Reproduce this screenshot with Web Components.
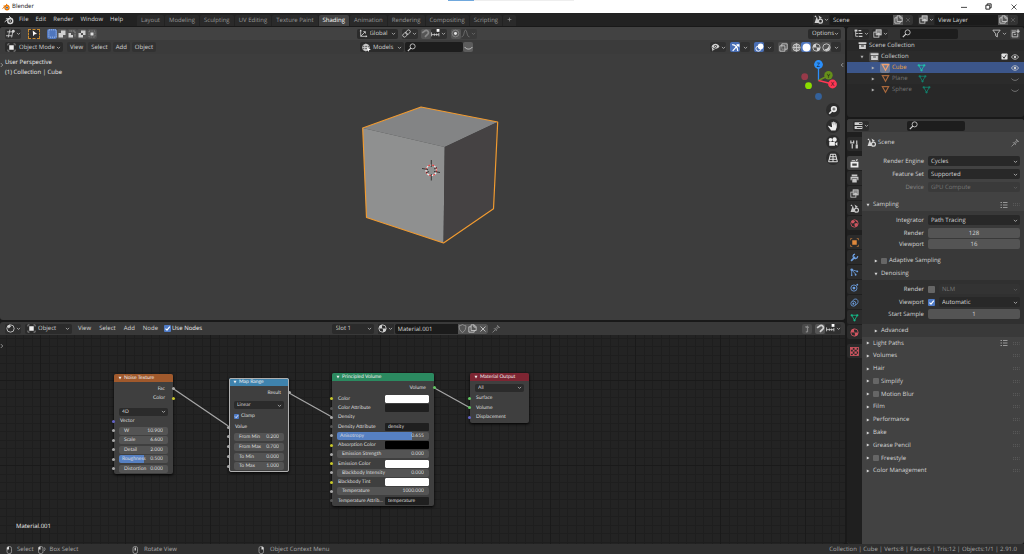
<!DOCTYPE html>
<html lang="en">
<head>
<meta charset="utf-8">
<title>Blender</title>
<style>
html, body { height: 100%; }
body { margin: 0; background: #191919; color: #d6d6d6; font: 6px/9px "Open Sans", "Noto Sans", sans-serif; text-rendering: geometricPrecision; overflow: hidden; }
</style>
</head>
<body>
<blender-app></blender-app>
<script>
const BASE = `
*, *::before { box-sizing: border-box; }
button, input, select { font: inherit; color: inherit; margin: 0; border: 0; padding: 0; background: none; text-rendering: inherit; }
select { appearance: none; }
input { min-width: 0; outline: 0; }
input[type=checkbox] { appearance: none; width: 7px; height: 7px; border-radius: 1px; background: #666; flex: none; }
input[type=checkbox]:checked { background: #4f7bc6 url("data:image/svg+xml,%3Csvg xmlns='http://www.w3.org/2000/svg' viewBox='0 0 7 7'%3E%3Cpath d='M1.5 3.6 3 5.2 5.8 1.6' fill='none' stroke='white' stroke-width='1.1'/%3E%3C/svg%3E"); }
label, span, button { white-space: nowrap; }
`;
function define(name, css, render) {
  customElements.define(name, class extends HTMLElement {
    connectedCallback() {
      if (this.shadowRoot) return;
      const a = (k, d = '') => this.getAttribute(k) ?? d;
      this.attachShadow({ mode: 'open' }).innerHTML = `<style>${BASE}${css}</style>${render(a, this)}`;
    }
  });
}

/* ---------- icons, on a 16 unit grid ---------- */
const S = 'fill="none" stroke="currentColor" stroke-width="1.5"';
const S2 = 'fill="none" stroke="currentColor" stroke-width="2.2"';
const F = 'fill="currentColor"';
const ICONS = {
  down: `<path ${S2} d="M3 6l5 5 5-5"/>`,
  left: `<path ${S2} d="M11 3 6 8l5 5"/>`,
  right: `<path ${S2} d="M5 3l5 5-5 5"/>`,
  triR: `<path ${F} d="M3 2l11 6-11 6z"/>`,
  triD: `<path ${F} d="M2 3h12L8 14z"/>`,
  plus: `<path ${S2} d="M8 2v12M2 8h12"/>`,
  close: `<path ${S} d="M3 3l10 10M13 3 3 13"/>`,
  blender: `<path ${S} d="M1 11l8-6.500M3 6h8M8 2l6 5"/><circle cx="10" cy="9.500" r="4" ${S2}/><circle cx="10" cy="9.500" r="1.300" ${F}/>`,
  blenderColor: `<g stroke="#ea7600"><path fill="none" stroke-width="2" d="M1 11l8-6.500M3 6h8M8 2l6 5"/><circle cx="10" cy="9.500" r="4" fill="#fff" stroke-width="2.600"/></g><circle cx="10" cy="9.500" r="1.800" fill="#265787"/>`,
  editor3d: `<path ${S} d="M2 5h12M0 12h11M7 1 4 15M12 5l-2 10"/><circle cx="13" cy="4" r="2.500" ${F}/>`,
  cursor: `<path fill="#fff" d="M4 1l10 8-5.500.8L5 14z"/>`,
  selNew: `<rect x="1.500" y="1.500" width="13" height="13" fill="none" stroke="#cfe0ff" stroke-width="1.200" stroke-dasharray="2 1.500"/>`,
  selAdd: `<path fill="#d0d0d0" d="M6 1h9v9h-5v5H1V6h5z"/>`,
  selSub: `<path fill="none" stroke="#c0c0c0" stroke-width="1.400" stroke-dasharray="2 1.300" d="M3 2h11v11"/><path fill="#d0d0d0" d="M1 6h5v4h4v5H1z"/>`,
  selXor: `<path fill="#d0d0d0" fill-rule="evenodd" d="M6 1h9v9h-5v5H1V6h5zM6 6v4h4V6z"/>`,
  selInt: `<rect x="2" y="2" width="12" height="12" fill="none" stroke="#b0b0b0" stroke-dasharray="2 1.300"/><rect x="5" y="5" width="6" height="6" fill="#e0e0e0"/>`,
  objmode: `<rect x="4" y="4" width="8" height="8" fill="#eee"/><path ${S} stroke-opacity=".6" d="M1.500 4.500v-3h3M11.500 1.500h3v3M14.500 11.500v3h-3M4.500 14.500h-3v-3"/>`,
  axes: `<path ${S} d="M3 2v11h11M3 13l7-7"/><path ${F} d="M1 4l2-3 2 3zM12 11l3 2-3 2zM7 4h5v5z"/>`,
  link: `<g ${S} transform="rotate(-42 8 8)"><rect x="0" y="5" width="9" height="6" rx="3"/><rect x="7" y="5" width="9" height="6" rx="3"/></g>`,
  magnet: `<path fill="none" stroke="currentColor" stroke-width="3" d="M2 7l4-3c5-4 9 2 6 5l-5 5"/>`,
  snap: `<path ${S} d="M1 6v7M1 10h13M6 8v4M10 8v4M14 7v6"/><rect x="10" y="0" width="5" height="5" fill="#fff"/>`,
  prop: `<circle cx="8" cy="8" r="6" ${S} opacity=".4"/><circle cx="8" cy="8" r="2.600" fill="#e4e4e4"/>`,
  curve: `<path ${S} d="M1 14c5 0 4-12 7-12s2 12 7 12"/>`,
  globe: `<circle cx="7" cy="8" r="6" ${S}/><path ${S} d="M7 2v12M1 8h12M3 4.500h8M3 11.500h8"/><ellipse cx="7" cy="8" rx="3" ry="6" ${S}/><path fill="#fff" d="M9 8l7 4-3 .5L11 16z"/>`,
  search: `<circle cx="10" cy="6" r="4.500" ${S}/><path ${S2} d="M6.800 9.200 1.500 14.500"/>`,
  eyeClosed: `<path ${S} d="M1 7c3 5 11 5 14 0"/>`,
  eye: `<path ${S} d="M1 8c3-6 11-6 14 0-3 6-11 6-14 0z"/><circle cx="8" cy="8" r="2.500" ${F}/>`,
  eyeSel: `<path ${F} fill-rule="evenodd" d="M1 6c3-6 11-6 14 0-2 3-5 5-9 3.500L3 8zM8 3.500a2.500 2.500 0 1 0 .1 0z"/><circle cx="8" cy="6" r="1.300" ${F}/><path ${F} d="M1 7l6 5H4.500L3 15z"/>`,
  gizmo: `<path ${S2} d="M2 3c6 0 10 5 10 11M3 14 13 3"/><path ${F} d="M9 2h6v6z"/>`,
  overlay: `<circle cx="10" cy="6" r="5" fill="#fff"/><circle cx="6" cy="10" r="4.500" fill="none" stroke="#fff" stroke-width="1.600"/>`,
  xray: `<path ${S} d="M1.500 5h9v9.500h-9zM5 5V1.500h9.500V11h-4"/><path ${S} stroke-dasharray="1.500 1.500" d="M5 5v6h5"/>`,
  wire: `<circle cx="8" cy="8" r="6.500" ${S}/><path ${S} d="M1.500 8h13M8 1.500v13"/><ellipse cx="8" cy="8" rx="3.200" ry="6.500" ${S}/>`,
  solid: `<circle cx="8" cy="8" r="7" fill="#fff"/>`,
  matball: `<circle cx="8" cy="8" r="6.500" ${S}/><path ${F} d="M8 1.500A6.500 6.500 0 0 0 8 8h6.500A6.500 6.500 0 0 1 8 14.500 6.500 6.500 0 0 0 8 8H1.500A6.500 6.500 0 0 1 8 1.500z"/>`,
  rendered: `<circle cx="8" cy="8" r="6.500" ${S}/><path ${F} d="M4 11a7 7 0 0 0 8-7 6 6 0 0 1-4 10 6 6 0 0 1-4-3z"/>`,
  outliner: `<path ${S} d="M3 4v9h5M3 8h5"/><rect x="1" y="1" width="5" height="3.500" ${F}/><path ${S2} d="M8 3h5M9 8h6M9 13h6"/>`,
  layers: `<rect x="1.500" y="5.500" width="9" height="9" ${S}/><rect x="5.500" y="1.500" width="9" height="9" fill="#888" stroke="currentColor" stroke-width="1.500"/><path ${F} d="M6 10l3-4 2 2 1-1 2 3z"/>`,
  filter: `<path ${S} d="M1.500 2h13l-5 6.500V14l-3-2V8.500z"/>`,
  newcol: `<path ${S} d="M2 6v8h10V8M2 6h6M5 9.500h4M1 3.500h8"/><path ${S2} d="M12.500 1v6M9.500 4h6"/>`,
  archive: `<path ${F} d="M1 2h14v3.500H1zM2 6.500h12V14H2zM5.500 8v1.800h5V8z" fill-rule="evenodd"/>`,
  mesh: `<path fill="none" stroke="currentColor" stroke-width="2.200" d="M2.500 3h11L8 13z"/>`,
  meshData: `<path ${S} d="M3 4h10L8 13z"/><g ${F}><circle cx="3" cy="4" r="2"/><circle cx="13" cy="4" r="2"/><circle cx="8" cy="13" r="2"/></g>`,
  scene: `<path ${F} d="M5 2l3.500 12H1zM1 2l2-1 1 2-2 1z"/><circle cx="11.500" cy="11" r="3.500" ${S2}/><path ${F} d="M8 1l6 4-4 2z"/>`,
  copy: `<path ${S} d="M5.500 1.500H11L14.500 5v6.500h-9zM10.500 1.500V5.500h4M5.500 5h-4v9.500H11v-3"/>`,
  shield: `<path ${S} d="M2 3c3 0 4-1 6-2 2 1 3 2 6 2 0 6-1 9-6 12-5-3-6-6-6-12z"/>`,
  pin: `<path ${S} d="M1 15l5-5M3.500 7.500l5 5M5 8c2 0 5-2 5-5M8 11c0-2 2-5 5-5M9 2l5 5"/>`,
  props: `<rect x="1" y="2" width="14" height="5" rx="1" ${F}/><rect x="1" y="9" width="14" height="5" rx="1" ${F}/><path stroke="#2b2b2b" stroke-width="1.600" d="M9 4.500h5M5 11.500h9"/>`,
  tool: `<path ${S2} d="M4 7v8M12 1v7"/><path ${S2} d="M1.500 1v4h5V1"/><rect x="10" y="8" width="4" height="7" ${F}/>`,
  render: `<path ${F} fill-rule="evenodd" d="M1 5h14v10H1zM4 8v4h8V8z"/><path ${S} d="M3 3h6M11 1.500h3M10 4l2-2"/>`,
  output: `<path ${F} d="M3 1h10v3H3zM1 5h14v6h-2V8H3v3H1zM4 9h8v6H4z"/>`,
  world: `<circle cx="8" cy="8" r="6.500" ${S}/><path ${F} d="M2 5l4-3 3 2-2 3-3 1zM8 8l5-1 1 3-4 4-2-3zM10 2l4 3h-3z"/>`,
  object: `<rect x="4" y="4" width="8" height="8" ${F}/><path ${S} stroke-opacity=".7" d="M1 4V1h3M12 1h3v3M15 12v3h-3M4 15H1v-3"/>`,
  wrench: `<path fill="none" stroke="currentColor" stroke-width="3" d="M2 14l7-7"/><path ${S2} d="M13.500 5.500A4 4 0 1 1 9 2"/>`,
  particles: `<path ${S} d="M3 3l10 3M3 3l7 8M3 3v10"/><g ${F}><circle cx="3" cy="3" r="2.300"/><circle cx="13" cy="6" r="1.600"/><circle cx="10" cy="12" r="1.600"/><circle cx="3" cy="13" r="1.400"/></g>`,
  physics: `<circle cx="7" cy="9" r="5.500" ${S}/><circle cx="7" cy="9" r="2.500" ${F}/><circle cx="13" cy="3" r="1.600" ${F}/>`,
  constraint: `<circle cx="6" cy="10" r="4.500" ${S}/><circle cx="6" cy="10" r="1.800" ${F}/><path ${S} d="M5 5c2-5 11-4 9 3-1 3-3 4-4 4"/>`,
  texture: `<path ${F} d="M1 1h4v4H1zM8 1h4v4H8zM5 5h3v3H5zM12 5h3v3h-3zM1 8h4v4H1zM8 8h4v4H8zM5 12h3v3H5zM12 12h3v3h-3z"/><rect x="1" y="1" width="14" height="14" ${S}/>`,
  list: `<path ${S} d="M1 3h3M1 8h3M1 13h3M6 3h9M6 8h9M6 13h9"/>`,
  grip: `<path stroke="currentColor" stroke-width="1.400" stroke-dasharray="1.400 3" d="M1 6h14M1 10h14"/>`,
  zoom: `<circle cx="9.500" cy="6.500" r="5" ${F}/><path fill="none" stroke="currentColor" stroke-width="2.600" d="M6 10l-4 4"/><path stroke="#333" stroke-width="1.200" d="M9.500 4v5M7 6.500h5"/>`,
  hand: `<path ${F} d="M4 9 1 7.500c-1 0-1 1 0 2L5 15h7l2-5V4.500c0-1-1.500-1-1.600 0L12 8V2.500c0-1.200-1.600-1.200-1.700 0L10 7.500V1.500C10 .3 8.300.3 8.300 1.500V7.500L7.500 2.500C7.300 1.300 5.700 1.500 5.800 2.700L6.500 10z"/>`,
  camera: `<circle cx="4" cy="4.500" r="3" ${F}/><circle cx="10.500" cy="4" r="3.500" ${F}/><path ${F} d="M2 8h9v6H2zM12 10l3-2v6l-3-2z"/>`,
  persp: `<path ${S} d="M4 2h8l3 12H1zM3 6h10M2 10h12M8 2v12"/>`,
  mouseL: `<rect x="4" y="1" width="9" height="14" rx="3.500" ${S}/><path fill="#e0e0e0" d="M4 7V3l4-2v6z"/>`,
  mouseLd: `<rect x="1" y="1" width="9" height="14" rx="3.500" ${S}/><path fill="#e0e0e0" d="M1 7V3l4-2v6z"/><path ${S} d="M12 3c3 1 3 5 0 7"/>`,
  mouseM: `<rect x="4" y="1" width="9" height="14" rx="3.500" ${S}/><rect x="7.300" y="3" width="2.400" height="6" fill="#e0e0e0"/>`,
  mouseR: `<rect x="4" y="1" width="9" height="14" rx="3.500" ${S}/><path fill="#e0e0e0" d="M13 7V3L9 1v6z"/>`,
  node: `<circle cx="8" cy="8" r="6.500" ${S}/><path ${F} d="M2 4l4-3 3 3-4 4z"/>`,
  parent: `<path ${S2} d="M8 14V5H4M8 14H5"/><path ${F} d="M5 7l3-5 3 5z"/>`,
  minimize: `<path ${S2} d="M0 9h16"/>`,
  restore: `<path ${S2} d="M2 5h9v9H2zM5 5V2h9v9h-3"/>`,
  checked: `<rect x="1" y="1" width="14" height="14" rx="2" fill="#e4e4e4"/><path fill="none" stroke="#222" stroke-width="2" d="M4 8l3 4 5-8"/>`
};
define('ui-icon', `:host { display: inline-flex; flex: none; } svg { display: block; }`,
  a => `<svg width="${a('s', 10)}" height="${a('s', 10)}" viewBox="0 0 16 16" aria-hidden="true">${ICONS[a('n')]}</svg>`);

/* icon button; "menu" adds a drop-down arrow */
define('ui-tool', `
:host { display: block; flex: none; }
button { display: flex; align-items: center; justify-content: center; gap: 1px; width: var(--w, 10px); height: 10px; background: var(--bg, transparent); border-radius: var(--r, 2px); color: var(--fg, #d0d0d0); }`,
  a => `<button type="button" aria-label="${a('label', a('n'))}"><ui-icon n="${a('n')}" s="${a('s', 9)}"></ui-icon>${a('menu') ? '<ui-icon n="down" s="5"></ui-icon>' : ''}</button>`);

/* drop-down list with optional leading icon */
define('ui-select', `
:host { display: block; }
div { display: flex; align-items: center; position: relative; height: var(--h, 10px); border-radius: 2px; background: var(--bg, #2b2b2b); color: var(--fg, #d0d0d0); }
select { width: 100%; height: 100%; padding-left: var(--pl, 3px); }
.i { position: absolute; left: 2px; } .d { position: absolute; right: 2px; }`,
  a => `<div>${a('icon') ? `<ui-icon class="i" n="${a('icon')}" s="9"></ui-icon>` : ''}<select aria-label="${a('label')}"><option>${a('value')}</option></select><ui-icon class="d" n="down" s="5"></ui-icon></div>`);

define('ui-search', `
:host { display: block; }
div { display: flex; align-items: center; height: 10px; border-radius: 2px; background: #1d1d1d; color: #d0d0d0; padding-left: 2px; gap: 2px; }
input { flex: 1; height: 10px; width: 20px; }`,
  a => `<div><ui-icon n="search" s="9"></ui-icon><input type="text" aria-label="${a('label')}"></div>`);

define('ui-menus', `
:host { display: flex; } button { height: 10px; padding: 0 var(--px, 3px); margin-right: var(--gap, 1px); border-radius: 2px; background: var(--mbg, transparent); }`,
  a => a('items').split(',').map(t => `<button type="button">${t}</button>`).join(''));

/* ---------- window title and top bar ---------- */
define('title-bar', `
:host { display: flex; align-items: center; height: 13px; background: #fff; color: #111; padding: 0 7px 0 2px; position: relative; }
span { flex: 1; padding-left: 2px; }
.win { display: flex; gap: 18px; color: #222; }
i { position: absolute; top: 0; left: 448px; width: 126px; height: 1px; background: linear-gradient(90deg, #70a8dd 26px, #eee 26px); }`,
  () => `<i></i><ui-icon n="blenderColor" s="8"></ui-icon><span>Blender</span><div class="win">
<ui-tool n="minimize" s="6" style="--w:7px;--fg:#222"></ui-tool><ui-tool n="restore" s="7" style="--w:7px;--fg:#222"></ui-tool><ui-tool n="close" s="8" style="--w:7px;--fg:#222"></ui-tool></div>`);

define('id-field', `
:host { display: flex; gap: 1px; }
div { display: flex; height: 10px; border-radius: 2px; background: #1b1b1b; overflow: hidden; }
input { width: 63px; padding-left: 3px; height: 10px; }
ui-tool { --r: 0; }`,
  a => `<ui-tool n="${a('icon')}" menu="1" style="--w:16px;--bg:#2c2c2c"></ui-tool><div><input type="text" aria-label="${a('label')}" value="${a('value')}">${
    a('user') ? '<ui-tool n="shield" style="--bg:#555;--fg:#999;--w:10px"></ui-tool>' : ''}<ui-tool n="copy" style="--bg:#555"></ui-tool><ui-tool n="close" s="${a('user') ? 8 : 6}" style="--bg:${a('user') ? '#555' : '#333'};--fg:${a('user') ? '#ddd' : '#777'}"></ui-tool></div>`);

define('top-bar', `
:host { display: flex; align-items: center; height: 13px; background: #222; padding: 0 6px 0 4px; }
ui-menus { padding-left: 2px; }
nav { display: flex; align-self: flex-end; margin-left: 10px; gap: 1px; }
nav button { height: 11px; padding: 0 4px; border-radius: 2px 2px 0 0; background: #2a2a2a; color: #979797; }
nav button.on { background: #424242; color: #fff; }
.end { margin-left: auto; display: flex; gap: 5px; }`,
  () => `<ui-icon n="blender" s="10"></ui-icon><ui-menus items="File,Edit,Render,Window,Help"></ui-menus>
<nav>${['Layout', 'Modeling', 'Sculpting', 'UV Editing', 'Texture Paint', 'Shading', 'Animation', 'Rendering', 'Compositing', 'Scripting']
    .map(t => `<button type="button"${t === 'Shading' ? ' class="on"' : ''}>${t}</button>`).join('')}<button type="button" aria-label="Add workspace"><ui-icon n="plus" s="5"></ui-icon></button></nav>
<div class="end"><id-field icon="scene" label="Scene" value="Scene"></id-field><id-field icon="layers" label="View layer" value="View Layer"></id-field></div>`);

/* header strip with start, centre and end slots */
define('area-header', `
:host { display: flex; align-items: center; height: 13px; background: var(--hbg, #393939); padding: 0 4px 0 5px; flex: none; }
div { display: flex; align-items: center; }
.s, .e { flex: 1 1 0; } .c { padding-right: 13px; } .e { justify-content: flex-end; }`,
  () => `<div class="s"><slot name="s"></slot></div><div class="c"><slot name="c"></slot></div><div class="e"><slot name="e"></slot></div>`);

/* ---------- 3D viewport ---------- */
define('view-3d', `
:host { display: flex; flex-direction: column; background: #3d3d3d; min-height: 0; border-radius: 3px; overflow: hidden; }
.r { display: flex; align-items: center; }
.scene { flex: 1; position: relative; padding: 4px 5px; color: #eee; }
p { margin: 0 0 1px; line-height: 9px; }
.cube { position: absolute; left: 360px; top: 51px; }
.giz { position: absolute; right: 5px; top: 4px; }
.nav { position: absolute; right: 5px; top: 49px; display: grid; gap: 2px; }
.l, .rr { position: absolute; top: 8px; left: -1px; color: #aaa; } .rr { left: auto; right: 0; }
.nav button { width: 14px; height: 14px; border-radius: 7px; background: #2c2c2c; color: #eee; display: grid; place-items: center; }`,
  () => `
<area-header style="--hbg:#424242">
 <div slot="s" class="r"><ui-tool n="editor3d" menu="1" style="--w:16px;--bg:#303030"></ui-tool>
  <ui-tool n="cursor" s="7" style="--w:12px;--bg:#303030;margin:0 7px;outline:1px dashed #c98a2e;outline-offset:-1px"></ui-tool>
  <ui-tool n="selNew" style="--bg:#4f76bd"></ui-tool><ui-tool n="selAdd" s="8" style="--bg:#555"></ui-tool><ui-tool n="selSub" s="8" style="--bg:#505050"></ui-tool><ui-tool n="selXor" s="8" style="--bg:#505050"></ui-tool><ui-tool n="selInt" s="8" style="--bg:#505050"></ui-tool></div>
 <div slot="c" class="r"><ui-select icon="axes" label="Transform orientation" value="Global" style="--pl:13px;width:41px;margin-right:4px"></ui-select>
  <ui-tool n="link" menu="1" label="Pivot" style="--w:16px;--bg:#303030;margin-right:3px"></ui-tool><ui-tool n="magnet" label="Snap" style="--bg:#555;--fg:#888"></ui-tool><ui-tool n="snap" menu="1" label="Snap to" style="--w:16px;--bg:#303030;margin-right:4px"></ui-tool>
  <ui-tool n="prop" label="Proportional editing" style="--bg:#565656"></ui-tool><ui-tool n="curve" menu="1" label="Falloff" style="--w:16px;--bg:#3a3a3a;--fg:#777"></ui-tool></div>
 <div slot="e"><ui-select label="Options" value="Options" style="width:33px;--pl:4px"></ui-select></div>
</area-header>
<area-header style="--hbg:#3b3b3b;height:14px">
 <div slot="s" class="r"><ui-select icon="objmode" label="Mode" value="Object Mode" style="--pl:14px;width:58px;margin-right:4px"></ui-select><ui-menus items="View,Select,Add,Object" style="--mbg:#323232;--gap:2px"></ui-menus></div>
 <div slot="c" class="r"><ui-select icon="globe" label="Asset" value="Models" style="--pl:13px;width:44px;margin-right:1px"></ui-select><ui-search label="Search assets" style="width:58px"></ui-search><ui-tool n="eyeClosed" style="--bg:#5c5c5c"></ui-tool></div>
 <div slot="e" class="r"><ui-tool n="eyeSel" menu="1" style="--w:16px;--bg:#303030;margin-right:4px"></ui-tool><ui-tool n="gizmo" style="--bg:#4a6fb5;--fg:#fff"></ui-tool><ui-tool n="down" s="5" label="Gizmos" style="--bg:#303030;margin-right:4px"></ui-tool><ui-tool n="overlay" style="--bg:#4a6fb5"></ui-tool><ui-tool n="down" s="5" label="Overlays" style="--bg:#303030;margin-right:4px"></ui-tool><ui-tool n="xray" style="--bg:#505050;margin-right:3px"></ui-tool><ui-tool n="wire" style="--bg:#505050"></ui-tool><ui-tool n="solid" style="--bg:#4f76bd"></ui-tool><ui-tool n="matball" style="--bg:#505050"></ui-tool><ui-tool n="rendered" style="--bg:#505050"></ui-tool><ui-tool n="down" s="5" label="Shading" style="--bg:#303030"></ui-tool></div>
</area-header>
<div class="scene">
 <p>User Perspective</p><p>(1) Collection | Cube</p>
 <ui-icon class="l" n="right" s="6"></ui-icon><ui-icon class="rr" n="left" s="6"></ui-icon>
 <svg class="cube" width="140" height="140" viewBox="360 105 140 140" role="img" aria-label="Cube">
  <path fill="#838485" d="M362.700 128 421 107l76.700 15-53 25z"/><path fill="#8f9090" d="M362.700 128l82 19-1.200 96-77-25.500z"/><path fill="#454243" d="M444.700 147l53-25-4.200 86.700-50 34.300z"/>
  <path fill="none" stroke="#f09a30" stroke-width="1.200" stroke-linejoin="round" d="M362.700 128 421 107l76.700 15-4.200 86.700-50 34.300-77-25.500z"/>
  <circle cx="431.300" cy="170.300" r="5.300" fill="none" stroke="#eee" stroke-width="1.200"/><circle cx="431.300" cy="170.300" r="5.300" fill="none" stroke="#e04040" stroke-width="1.200" stroke-dasharray="2.100 2.100"/>
  <path stroke="#222" stroke-width=".8" d="M431.300 160v7M431.300 174v6.500M422 168.500l6 1M434 171.500l6 1M426 173l3-1.500M434 169l3-1.500"/>
 </svg>
 <svg class="giz" width="40" height="46" viewBox="800 58 40 46" aria-label="Orientation" font-size="6" text-anchor="middle">
  <circle cx="804.700" cy="76.700" r="3.400" fill="#963a49"/><circle cx="818.500" cy="96.500" r="3.400" fill="#34619a"/>
  <path stroke="#2b8ffb" stroke-width="1.300" d="M818.500 80.500v-14"/><path stroke="#6b8f1c" stroke-width="1.500" d="M818.500 80.500l8-4"/><path stroke="#ff3653" stroke-width="1.500" d="M818.500 80.500l12 3"/>
  <circle cx="828.500" cy="75.300" r="4.200" fill="#66901a"/><circle cx="832.500" cy="84" r="4.400" fill="#ff3653"/><circle cx="818.500" cy="64.500" r="4.400" fill="#2b8ffb"/><circle cx="808.500" cy="85.700" r="3.400" fill="#8bdc00"/>
  <g fill="#111"><text x="818.500" y="67">Z</text><text x="828.500" y="78">Y</text><text x="832.500" y="86">X</text></g>
 </svg>
 <div class="nav">${['zoom', 'hand', 'camera', 'persp'].map(n => `<button type="button" aria-label="${n}"><ui-icon n="${n}" s="10"></ui-icon></button>`).join('')}</div>
</div>`);

/* ---------- shader nodes ---------- */
/* A row of a node. kind: out, in, num, select, check, color, text */
define('node-row', `
:host { display: flex; align-items: center; height: 9px; position: relative; padding: 0 5px; }
label, .t { display: flex; align-items: center; width: 100%; height: 9px; gap: 2px; }
.out { justify-content: flex-end; padding-right: 3px; }
.in { padding-left: 1px; }
.num { height: 8px; border-radius: 2px; background: #545454; padding: 0 5px; gap: 0; }
.num span { flex: none; }
.num input { flex: 1 1 0; width: 0; text-align: right; height: 8px; }
.num[style] { padding-left: 3px; }
.two { padding-left: 1px; gap: 0; } .two span { flex: 1 1 0; width: 0; }
.two input { width: 44px; height: 8px; border-radius: 1px; background: #1f1f1f; padding: 0 3px; flex: none; }
.two input[type=color]::-webkit-color-swatch-wrapper { padding: 0; }
.two input[type=color]::-webkit-color-swatch { border: 0; border-radius: 1px; }
.two input[type=color] { padding: 0; }
ui-select { width: 100%; --h: 8px; --bg: #2b2b2b; }
input[type=checkbox] { width: 5px; height: 5px; }
.dot { position: absolute; top: 3px; width: 3px; height: 3px; border-radius: 2px; left: -2px; background: var(--d); }
.dot.o { left: auto; right: -2px; }`,
  a => {
    const k = a('kind'), t = a('t'), v = a('v'), d = a('d');
    const dot = d ? `<i class="dot${k === 'out' ? ' o' : ''}" style="--d:${d}"></i>` : '';
    const fill = a('fill') ? ` style="background:linear-gradient(90deg,#5680c2 ${a('fill')},#545454 ${a('fill')})"` : '';
    return dot + ({
      out: () => `<div class="t out">${t}</div>`,
      in: () => `<div class="t in">${t}</div>`,
      num: () => `<label class="num"${fill}><span>${t}</span><input type="text" value="${v}"></label>`,
      select: () => `<ui-select label="Mode" value="${v}"></ui-select>`,
      check: () => `<label><input type="checkbox" checked><span>${t}</span></label>`,
      color: () => `<label class="two"><span>${t}</span><input type="color" value="${v}"></label>`,
      text: () => `<label class="two"><span>${t}</span><input type="text" value="${v}"></label>`
    })[k]();
  });

define('shader-node', `
:host { position: absolute; display: flex; flex-direction: column; background: #3f3f3f; border-radius: 2px; box-shadow: 0 1px 3px #000; font: 5px/8px Lato, "Open Sans", sans-serif; color: #ddd; outline: 1px solid var(--line, transparent); outline-offset: -1px; }
header { display: flex; align-items: center; gap: 2px; height: 8px; padding-left: 4px; background: var(--c); border-radius: 2px 2px 0 0; color: #eee; }
div { flex: 1; display: flex; flex-direction: column; justify-content: space-between; padding: 2px 0 1px; }`,
  a => `<header><ui-icon n="triD" s="4"></ui-icon>${a('t')}</header><div><slot></slot></div>`);

const G = '#a8a8a8', Y = '#c7c729', V = '#6363c7', W = '#63c763', D = '#555';
define('shader-editor', `
:host { display: flex; flex-direction: column; min-height: 0; border-radius: 3px; overflow: hidden; }
.r { display: flex; align-items: center; }
label { display: flex; gap: 1px; align-items: center; margin-left: 1px; color: #eee; }
.canvas { flex: 1; position: relative; background-color: #232323;
 background-image: linear-gradient(90deg, #1a1a1a 1px, transparent 1px), linear-gradient(#1a1a1a 1px, transparent 1px), linear-gradient(90deg, #1e1e1e 1px, transparent 1px, transparent 9px, #1e1e1e 9px, #1e1e1e 10px, transparent 10px), linear-gradient(#1e1e1e 1px, transparent 1px, transparent 9px, #1e1e1e 9px, #1e1e1e 10px, transparent 10px);
 background-size: 85px 85px, 85px 85px, 17px 17px, 17px 17px; background-position: 40px 45px, 40px 45px, 6px 11px, 6px 11px; }
.links { position: absolute; left: 0; top: 0; }
.name { position: absolute; left: 16px; bottom: 13px; color: #eee; }
.l { position: absolute; left: -1px; top: 8px; color: #aaa; }`,
  () => `
<area-header>
 <div slot="s" class="r"><ui-tool n="node" menu="1" style="--w:16px;--bg:#2e2e2e;margin-right:4px"></ui-tool><ui-select icon="objmode" label="Shader type" value="Object" style="--pl:13px;width:47px;margin-right:3px"></ui-select><ui-menus items="View,Select,Add,Node" style="--gap:2px"></ui-menus><label><input type="checkbox" checked>Use Nodes</label></div>
 <div slot="c" class="r"><ui-select label="Slot" value="Slot 1" style="--pl:4px;width:42px;margin-right:4px"></ui-select><id-field icon="matball" user="1" label="Material" value="Material.001"></id-field><ui-tool n="pin" style="--fg:#888;margin-left:4px"></ui-tool></div>
 <div slot="e" class="r"><ui-tool n="parent" style="--bg:#4a4a4a;--fg:#888;margin-right:3px"></ui-tool><ui-tool n="magnet" style="--bg:#555"></ui-tool><ui-tool n="snap" menu="1" style="--w:16px;--bg:#303030"></ui-tool></div>
</area-header>
<div class="canvas">
 <svg class="links" width="560" height="200" viewBox="0 335 560 200" fill="none" stroke="#a5a5a5" stroke-width="1.300" aria-hidden="true"><path d="M173 388.500l56 38M289 393l43 24M433.500 387.500l36 20"/></svg>
 <shader-node t="Noise Texture" style="left:114px;top:39px;width:59px;height:100px;--c:#a0592c">
  <node-row kind="out" t="Fac" d="${G}"></node-row><node-row kind="out" t="Color" d="${Y}"></node-row><node-row kind="select" v="4D" style="margin-top:4px"></node-row><node-row kind="in" t="Vector" d="${V}"></node-row>
  <node-row kind="num" t="W" v="10.900" d="${G}"></node-row><node-row kind="num" t="Scale" v="6.600" d="${G}"></node-row><node-row kind="num" t="Detail" v="2.000" d="${G}"></node-row><node-row kind="num" t="Roughness" v="0.500" fill="50%" d="${G}"></node-row><node-row kind="num" t="Distortion" v="0.000" d="${G}"></node-row>
 </shader-node>
 <shader-node t="Map Range" style="left:229px;top:43px;width:60px;height:94px;--c:#3f83ad;--line:#b0b0b0">
  <node-row kind="out" t="Result" d="${G}"></node-row><node-row kind="select" v="Linear" style="margin-top:3px"></node-row><node-row kind="check" t="Clamp" style="margin-top:1px"></node-row><node-row kind="in" t="Value" d="${G}" style="margin-top:1px"></node-row>
  <node-row kind="num" t="From Min" v="0.200" d="${G}"></node-row><node-row kind="num" t="From Max" v="0.700" d="${G}"></node-row><node-row kind="num" t="To Min" v="0.000" d="${G}"></node-row><node-row kind="num" t="To Max" v="1.000" d="${G}"></node-row>
 </shader-node>
 <shader-node t="Principled Volume" style="left:332px;top:38px;width:102px;height:133px;--c:#2b8a60">
  <node-row kind="out" t="Volume" d="${W}"></node-row><node-row kind="color" t="Color" v="#ffffff" d="${Y}" style="margin-top:2px"></node-row><node-row kind="text" t="Color Attribute" d="${D}"></node-row><node-row kind="in" t="Density" d="${G}"></node-row><node-row kind="text" t="Density Attribute" v="density" d="${D}"></node-row>
  <node-row kind="num" t="Anisotropy" v="0.655" fill="82%" d="${G}"></node-row><node-row kind="color" t="Absorption Color" v="#000000" d="${Y}"></node-row><node-row kind="num" t="Emission Strength" v="0.000" d="${G}"></node-row><node-row kind="color" t="Emission Color" v="#ffffff" d="${Y}"></node-row>
  <node-row kind="num" t="Blackbody Intensity" v="0.000" d="${G}"></node-row><node-row kind="color" t="Blackbody Tint" v="#ffffff" d="${Y}"></node-row><node-row kind="num" t="Temperature" v="1000.000" d="${G}"></node-row><node-row kind="text" t="Temperature Attrib..." v="temperature" d="${D}"></node-row>
 </shader-node>
 <shader-node t="Material Output" style="left:470px;top:38px;width:59px;height:50px;--c:#7d2532">
  <node-row kind="select" v="All"></node-row><node-row kind="in" t="Surface" d="${W}" style="margin-top:1px"></node-row><node-row kind="in" t="Volume" d="${W}"></node-row><node-row kind="in" t="Displacement" d="${V}"></node-row>
 </shader-node>
 <ui-icon class="l" n="right" s="6"></ui-icon><span class="name">Material.001</span>
</div>`);

/* ---------- outliner ---------- */
define('tree-row', `
:host { display: flex; align-items: center; height: 11px; padding: 0 5px 0 var(--in, 12px); gap: 2px; background: var(--bg, #282828); color: var(--fg, #d0d0d0); }
.box { display: grid; place-items: center; width: 10px; height: 10px; border-radius: 2px; background: var(--box, transparent); color: var(--ic, inherit); }
.arr { color: #b0b0b0; margin-right: 3px; }
.data { color: var(--dc); margin-left: 8px; }
.end { margin-left: auto; display: flex; gap: 3px; align-items: center; color: var(--ec, #d0d0d0); }`,
  a => `${a('arr') ? `<ui-icon class="arr" n="${a('arr')}" s="4"></ui-icon>` : ''}<span class="box"><ui-icon n="${a('icon')}" s="9"></ui-icon></span><span>${a('t')}</span>${a('data') ? '<ui-icon class="data" n="meshData" s="9"></ui-icon>' : ''}
<div class="end">${a('check') ? '<ui-icon n="checked" s="7"></ui-icon>' : ''}${a('eye') ? `<ui-icon n="${a('eye')}" s="8"></ui-icon>` : ''}</div>`);

define('out-liner', `
:host { display: block; height: 90px; background: #282828; border-radius: 3px; overflow: hidden; flex: none; }
header { display: flex; align-items: center; height: 13px; background: #323232; padding: 0 4px 0 6px; }
header > * { margin-right: 3px; }`,
  () => `<header><ui-tool n="outliner" menu="1" style="--w:16px;--bg:#2a2a2a"></ui-tool><ui-tool n="layers" menu="1" style="--w:16px;--bg:#2a2a2a"></ui-tool><ui-search label="Filter" style="width:58px;margin:0 auto 0 9px"></ui-search><ui-tool n="filter" menu="1" style="--w:16px"></ui-tool><ui-tool n="newcol" style="--bg:#444;margin-right:0"></ui-tool></header>
<tree-row icon="archive" t="Scene Collection" style="--in:10px"></tree-row>
<tree-row arr="triD" icon="archive" t="Collection" check="1" eye="eye" style="--in:13px;--bg:#2b2b2b;--box:#4a4a4a"></tree-row>
<tree-row arr="triR" icon="mesh" t="Cube" data="1" eye="eye" style="--in:24px;--bg:#3c568a;--fg:#f0a340;--box:#6d7b97;--ic:#f0a070;--dc:#20c0a8"></tree-row>
<tree-row arr="triR" icon="mesh" t="Plane" data="1" eye="eyeClosed" style="--in:24px;--bg:#2b2b2b;--fg:#777;--ic:#a8683c;--dc:#12806c;--ec:#888"></tree-row>
<tree-row arr="triR" icon="mesh" t="Sphere" data="1" eye="eyeClosed" style="--in:24px;--fg:#777;--ic:#a8683c;--dc:#12806c;--ec:#888"></tree-row>`);

/* ---------- properties ---------- */
define('prop-row', `
:host { display: block; padding: 0 4px 0 0; }
label { display: grid; grid-template-columns: 62px minmax(0, 1fr); gap: 4px; align-items: center; height: 10px; }
label > span { text-align: right; }
.f { display: flex; gap: 4px; align-items: center; position: relative; }
.f select { flex: 1; min-width: 0; height: 10px; border-radius: 2px; background: #282828; padding-left: 3px; }
.f > ui-icon { position: absolute; right: 2px; }
.f input[type=text] { width: 100%; height: 10px; background: #545454; text-align: center; border-radius: 2px; }
:host([off]) span { color: #888; } :host([dim]) select { color: #777; background: var(--dimbg, #3a3a3a); }
:host([dim]) .f ui-icon { color: #666; }`,
  a => `<label><span>${a('t')}</span><div class="f">${a('chk') ? `<input type="checkbox" aria-label="${a('t')} denoising"${a('chk') === 'on' ? ' checked' : ''}>` : ''}${
    a('num') ? `<input type="text" value="${a('num')}">` : `<select aria-label="${a('t')}"><option>${a('v')}</option></select><ui-icon n="down" s="5"></ui-icon>`}</div></label>`);

define('panel-head', `
:host { display: flex; align-items: center; gap: 3px; height: var(--h, 13px); padding: 0 4px 0 var(--in, 4px); color: #d6d6d6; }
button { display: flex; align-items: center; gap: 3px; height: 12px; }
label { display: flex; align-items: center; gap: 2px; }
label input[type=checkbox] { width: 6px; height: 6px; }
.end { margin-left: auto; display: flex; gap: 5px; align-items: center; color: #b5b5b5; } .g { color: #888; }`,
  a => `${a('chk') ? `<button type="button" aria-label="Expand ${a('t')}"><ui-icon n="triR" s="4"></ui-icon></button><label><input type="checkbox">${a('t')}</label>`
    : `<button type="button"><ui-icon n="${a('open') ? 'triD' : 'triR'}" s="4"></ui-icon>${a('t')}</button>`}
<div class="end">${a('list') ? '<ui-icon n="list" s="8"></ui-icon>' : ''}${a('sub') ? '' : '<ui-icon class="g" n="grip" s="7"></ui-icon>'}</div>`);

define('prop-tabs', `
:host { display: block; width: 15px; background: #1f1f1f; padding-top: 5px; }
button { display: grid; place-items: center; width: 15px; height: 14px; margin-bottom: 1px; background: #2b2b2b; border-radius: 2px 0 0 2px; color: var(--c, #c8c8c8); }
.on { background: #424242; } .gap { margin-bottom: 5px; }`,
  () => [['tool', '', 'gap'], ['render', '#eee', 'on'], ['output'], ['layers'], ['scene'], ['world', '#d05560', 'gap'], ['object', '#e0893c'], ['wrench', '#6d9fe0'], ['particles', '#6d9fe0'], ['physics', '#6d9fe0'], ['constraint', '#6d9fe0'], ['meshData', '#14b886'], ['matball', '#d05560', 'gap'], ['texture', '#d05560']]
    .map(([n, c = '', k = '']) => `<button type="button" class="${k}" aria-label="${n}"${c ? ` style="--c:${c}"` : ''}><ui-icon n="${n}" s="9"></ui-icon></button>`).join(''));

define('prop-editor', `
:host { display: flex; flex-direction: column; flex: 1; min-height: 0; background: #424242; border-radius: 3px; overflow: hidden; }
header { display: flex; align-items: center; height: 13px; background: #3a3a3a; padding-left: 6px; flex: none; }
main { display: flex; flex: 1; min-height: 0; }
section { flex: 1; min-width: 0; }
.id { display: flex; align-items: center; gap: 2px; height: 20px; padding: 0 4px 0 5px; } .id ui-tool { margin-left: auto; }
.rows { display: grid; gap: 3px; padding: 4px 0 3px; } .tight { display: grid; gap: 1px; }
.body { background: #393939; } .inner { background: #303030; } .inner .rows { padding-bottom: 5px; }
.closed { display: flex; flex-direction: column; justify-content: space-between; height: 140px; --h: 12px; }`,
  () => `<header><ui-tool n="props" menu="1" style="--w:16px;--bg:#2c2c2c"></ui-tool><ui-search label="Search properties" style="width:58px;margin-left:38px"></ui-search></header>
<main><prop-tabs></prop-tabs><section>
 <div class="id"><ui-icon n="scene" s="9"></ui-icon><span>Scene</span><ui-tool n="pin" style="--fg:#999"></ui-tool></div>
 <div class="rows"><prop-row t="Render Engine" v="Cycles"></prop-row><prop-row t="Feature Set" v="Supported"></prop-row><prop-row t="Device" v="GPU Compute" off dim></prop-row></div>
 <panel-head open="1" list="1" t="Sampling" style="margin-top:3px"></panel-head>
 <div class="body">
  <div class="rows"><prop-row t="Integrator" v="Path Tracing"></prop-row><div class="tight"><prop-row t="Render" num="128"></prop-row><prop-row t="Viewport" num="16"></prop-row></div></div>
  <panel-head sub="1" chk="1" t="Adaptive Sampling" style="--in:12px;margin-top:2px"></panel-head>
  <panel-head sub="1" open="1" t="Denoising" style="--in:12px"></panel-head>
  <div class="inner"><div class="rows"><prop-row t="Render" chk="off" v="NLM" dim style="--dimbg:#333"></prop-row><div class="tight" style="gap:2px"><prop-row t="Viewport" chk="on" v="Automatic"></prop-row><prop-row t="Start Sample" num="1"></prop-row></div></div></div>
  <panel-head sub="1" t="Advanced" style="--in:12px"></panel-head>
 </div>
 <div class="closed"><panel-head list="1" t="Light Paths"></panel-head><panel-head t="Volumes"></panel-head><panel-head t="Hair"></panel-head><panel-head chk="1" t="Simplify"></panel-head><panel-head chk="1" t="Motion Blur"></panel-head><panel-head t="Film"></panel-head><panel-head t="Performance"></panel-head><panel-head t="Bake"></panel-head><panel-head t="Grease Pencil"></panel-head><panel-head chk="1" t="Freestyle"></panel-head><panel-head t="Color Management"></panel-head></div>
</section></main>`);

define('status-bar', `
:host { display: flex; align-items: center; box-sizing: border-box; height: 10px; background: #303030; padding: 1px 7px 0 5px; color: #a8a8a8; }
div { display: flex; align-items: center; gap: 5px; flex: 0 0 126px; }
.a { gap: 4px; } .end { margin-left: auto; }`,
  () => `<div class="a"><ui-icon n="mouseL" s="8"></ui-icon><span>Select</span><ui-icon n="mouseLd" s="8"></ui-icon><span>Box Select</span></div><div><ui-icon n="mouseM" s="8"></ui-icon><span>Rotate View</span></div><div><ui-icon n="mouseR" s="8"></ui-icon><span>Object Context Menu</span></div><span class="end">Collection | Cube | Verts:8 | Faces:6 | Tris:12 | Objects:1/1 | 2.91.0</span>`);

define('blender-app', `
:host { display: flex; flex-direction: column; height: 100vh; }
main { flex: 1; min-height: 0; display: grid; grid-template-columns: minmax(0, 1fr) 177px; gap: 2px; padding-top: 1px; }
.l { display: grid; grid-template-rows: 293fr 222fr; gap: 2px; min-height: 0; }
.r { display: flex; flex-direction: column; gap: 2px; min-height: 0; }`,
  () => `<title-bar></title-bar><top-bar></top-bar><main><div class="l"><view-3d></view-3d><shader-editor></shader-editor></div><div class="r"><out-liner></out-liner><prop-editor></prop-editor></div></main><status-bar></status-bar>`);
</script>
</body>
</html>
